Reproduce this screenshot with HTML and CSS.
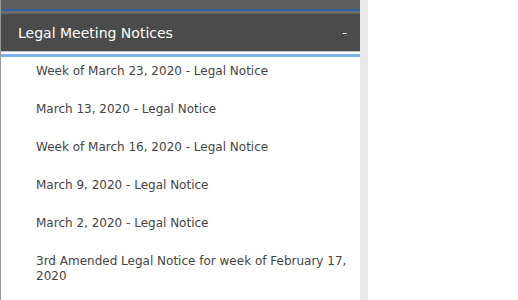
FILE: index.html
```html
<!DOCTYPE html>
<html lang="en">
<head>
    <meta charset="UTF-8">
    <meta name="viewport" content="width=device-width, initial-scale=1.0">
    <title>Legal Meeting Notices</title>
    <link rel="stylesheet" href="styles.css">
</head>
<body>
    <div class="page">
        <div class="sidebar">
            <div class="prev-panel"></div>
            <div class="panel-header">
                <span class="panel-title">Legal Meeting Notices</span>
                <span class="toggle">-</span>
            </div>
            <ul class="notices">
                <li><a href="#">Week of March 23, 2020 - Legal Notice</a></li>
                <li><a href="#">March 13, 2020 - Legal Notice</a></li>
                <li><a href="#">Week of March 16, 2020 - Legal Notice</a></li>
                <li><a href="#">March 9, 2020 - Legal Notice</a></li>
                <li><a href="#">March 2, 2020 - Legal Notice</a></li>
                <li><a href="#">3rd Amended Legal Notice for week of February 17, 2020</a></li>
            </ul>
        </div>
        <div class="gutter"></div>
    </div>
</body>
</html>
```

FILE: styles.css
```css
body {
    margin: 0;
    padding: 0;
    background-color: #fff;
    font-family: "DejaVu Sans", Verdana, sans-serif;
}

.page {
    display: flex;
    height: 300px;
    overflow: hidden;
}

.sidebar {
    width: 359px;
    border-left: 1px solid #9a9a9a;
}

.gutter {
    width: 8px;
    background-color: #e8e8e8;
}

.prev-panel {
    height: 9px;
    background-color: #5f5f5f;
    border-bottom: 2px solid #2e5f9f;
}

.panel-header {
    display: flex;
    justify-content: space-between;
    align-items: center;
    height: 37px;
    padding: 0 13px 0 17px;
    background-color: #4b4b4b;
    border-top: 3px solid #6a6a6a;
    border-bottom: 1px solid #c4c4c4;
    color: #fff;
}

.panel-title {
    font-size: 14px;
}

.toggle {
    font-size: 13px;
}

.notices {
    list-style: none;
    margin: 2px 0 0;
    padding: 0;
    border-top: 3px solid #7db1ee;
}

.notices li {
    padding: 7px 10px 16px 35px;
    font-size: 12px;
    line-height: 15px;
}

.notices a {
    color: #444;
    text-decoration: none;
}
```
